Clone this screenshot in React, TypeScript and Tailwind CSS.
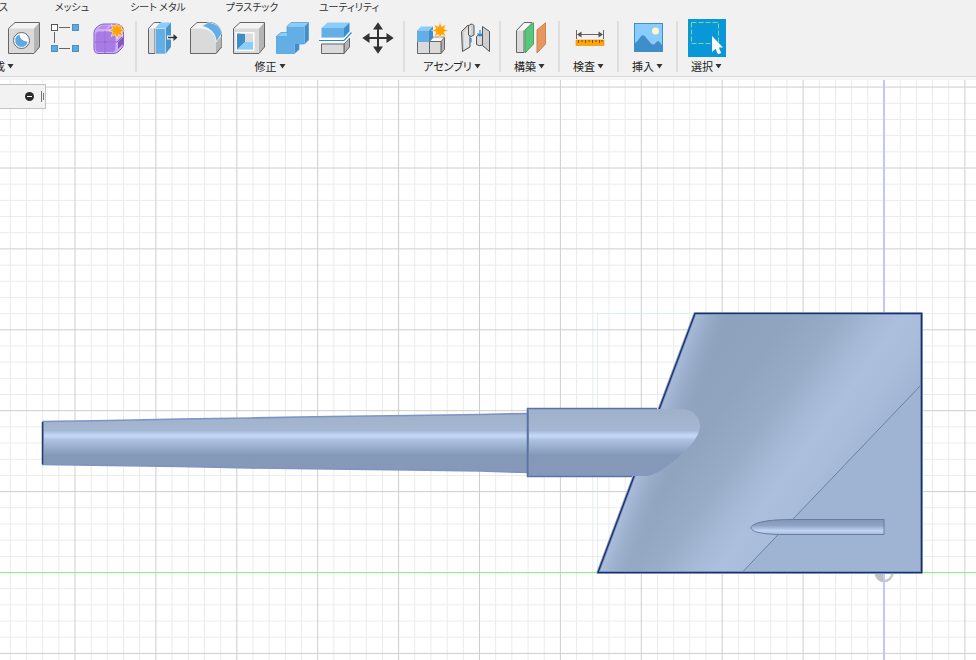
import React from 'react';

const FONT = "font-['Noto_Sans_CJK_JP',sans-serif] [font-feature-settings:'palt']";

// Screen position of the sketch origin and the spacing of the minor grid
const ORIGIN = { x: 884, y: 572.5 };
const STEP = 16.18;

const STAR_POINTS = Array.from({ length: 16 }, (_, i) => {
  const r = i % 2 === 0 ? 8.5 : 4.3;
  const a = (i * Math.PI) / 8;
  return `${(r * Math.sin(a)).toFixed(1)},${(-r * Math.cos(a)).toFixed(1)}`;
}).join(' ');

const Star = ({ x, y }: { x: number; y: number }) => (
  <polygon points={STAR_POINTS} transform={`translate(${x} ${y})`} fill="#ffa400" stroke="#f1f1f1" strokeWidth="0.6" />
);

const Icon: React.FC<{ children: React.ReactNode }> = ({ children }) => (
  <svg width="32" height="32" viewBox="0 0 32 32" className="overflow-visible" aria-hidden="true">
    {children}
  </svg>
);

const Cube = () => (
  <>
    <path d="M.5 6.5L7 .5H31.5L26 6.5Z" fill="#f4f4f4" />
    <path d="M26 6.5L31.5.5V25L26 31.5Z" fill="#b5b5b5" />
    <path d="M.5 6.5H26V31.5H.5Z" fill="#dadada" />
    <path d="M.5 6.5L7 .5H31.5V25L26 31.5H.5Z" fill="none" stroke="#666" />
  </>
);

const HoleIcon = () => (
  <Icon>
    <Cube />
    <circle cx="13.5" cy="18.5" r="8" fill="#fff" stroke="#666" />
    <path d="M11.5 12.8A6.2 6.2 0 1 0 19.6 19.5A7.5 7.5 0 0 1 11.5 12.8Z" fill="#5fa9e2" />
  </Icon>
);

const PatternIcon = () => (
  <Icon>
    <path d="M8 5.5H19M3.5 10V21M8 26.5H19" stroke="#666" fill="none" />
    <rect x=".5" y="2.5" width="6" height="6" fill="#fff" stroke="#555" />
    <g fill="#5fa9e2" stroke="#4a90c8">
      <rect x="21.5" y="2.5" width="6" height="6" />
      <rect x=".5" y="23.5" width="6" height="6" />
      <rect x="21.5" y="23.5" width="6" height="6" />
    </g>
  </Icon>
);

const FormIcon = () => (
  <Icon>
    <path d="M0 11Q0 8 2 6L5 3.500Q7 2 10 2H24Q29.500 4 29.500 8V22Q29.500 25 27 27L24 30Q22 31.500 19 31.500H5Q0 31.500 0 26Z" fill="#cfaef6" stroke="#8560bf" />
    <path d="M1.500 12Q2 9.500 5 9.500H10.500V19.500H1.500ZM11.500 9.500H19Q21.500 10 21.500 12V19.500H11.500ZM1.500 20.500H10.500V30H5Q1.500 30 1.500 26ZM11.500 20.500H21.500V26Q21.500 30 18 30H11.500Z" fill="#a87be6" />
    <path d="M4 7L8 3.500H15L12 7ZM14 7L17 3.500H22L19 7Z" fill="#b98bf0" />
    <path d="M24 20L29 15V22L24 27Z" fill="#8456c4" />
    <path d="M11 9V31M1 20H23L29 14" fill="none" stroke="#7650b0" strokeWidth="0.8" />
    <Star x={23} y={8.5} />
  </Icon>
);

const PressPullIcon = () => (
  <Icon>
    <path d="M1.500 6.500L7 .5H14L8 6.500V31.500H1.500Z" fill="#dcdcdc" stroke="#666" />
    <path d="M2 6.500L7.500 1H13L8 6.500Z" fill="#f6f6f6" />
    <path d="M8.500 6.500L13.500.5H24L18.500 6.500Z" fill="#8accfa" />
    <path d="M18.500 6.500L24 .5V25L18.500 32Z" fill="#4595cf" />
    <path d="M8.500 6.500H18.500V32H8.500Z" fill="#64aee6" stroke="#f1f1f1" strokeWidth="0.5" />
    <path d="M20 15.500H27" stroke="#f1f1f1" strokeWidth="4" />
    <path d="M21 15.500H28" stroke="#333" strokeWidth="1.400" />
    <path d="M26.500 12L30.500 15.500L26.500 19Z" fill="#333" />
  </Icon>
);

const FilletIcon = () => (
  <Icon>
    <path d="M.5 6.500L7 .5H20A12 12 0 0 1 31.500 12V25L26 31.500H.5Z" fill="#f4f4f4" stroke="#666" />
    <path d="M26 20L31.500 14V25L26 31.500Z" fill="#b5b5b5" />
    <path d="M.5 6.500H11Q25 8 26 20V31.500H.5Z" fill="#dadada" />
    <path d="M.5 6.500V31.500H26L31.500 25" fill="none" stroke="#666" />
    <path d="M12 4L18.500.3Q30 2 32 11L26.500 20Q25 7 12 4Z" fill="#64aee6" stroke="#f6f6f6" strokeWidth="0.600" />
  </Icon>
);

const ShellIcon = () => (
  <Icon>
    <Cube />
    <rect x="2.500" y="10" width="19" height="19" fill="#fff" />
    <rect x="4" y="11.500" width="16" height="16" fill="#dcdcdc" />
    <path d="M4 11.500L12 12V20L4 27.500Z" fill="#3e8fc9" />
    <path d="M4 27.500L12 20H20V27.500Z" fill="#8accfa" />
  </Icon>
);

const CombineIcon = () => (
  <Icon>
    <path d="M11 4.500L15 .5H32.500L28.500 4.500Z" fill="#8accfa" />
    <path d="M.5 14L5 10.500H12V14Z" fill="#8accfa" />
    <path d="M28.500 4.500L32.500.5V18L28.500 22Z" fill="#3e8fc9" />
    <path d="M18.500 22H23V27.500L18.500 31.500Z" fill="#3e8fc9" />
    <path d="M.5 14H11V4.500H28.500V22H18.500V31.500H.5Z" fill="#64aee6" />
    <path d="M.5 14L5 10.500H11V4.500L15 .5H32.500V18L28.500 22H23V27.500L18.500 31.500H.5Z" fill="none" stroke="#4a98d2" strokeWidth="0.7" />
  </Icon>
);

const SplitIcon = () => (
  <Icon>
    <path d="M2.500 6L8.500.5H30.500L25 6Z" fill="#8accfa" />
    <path d="M25 6L30.500.5V9.500L25 15.500Z" fill="#3e8fc9" />
    <path d="M2.500 6H25V15.500H2.500Z" fill="#64aee6" />
    <path d="M25 22L30.500 16V25L25 31.500Z" fill="#b5b5b5" stroke="#666" />
    <path d="M2.500 22H25V31.500H2.500Z" fill="#dadada" stroke="#666" />
    <path d="M.5 18.500H25L32.500 10.500" fill="none" stroke="#fff" strokeWidth="4" />
    <path d="M0 18.500H25L32.500 10.500" fill="none" stroke="#1b8bdc" strokeWidth="1.200" />
  </Icon>
);

const MoveIcon = () => (
  <Icon>
    <path d="M16 4V28M4 16H28" stroke="#333" strokeWidth="2" />
    <path d="M16 .3L21 7.500H11ZM16 31.700L11 24.500H21ZM.3 16L7.500 11V21ZM31.700 16L24.500 21V11Z" fill="#333" />
  </Icon>
);

const NewComponentIcon = () => (
  <Icon>
    <path d="M26 19.500L29.500 15V27.500L26 31.500Z" fill="#b5b5b5" stroke="#666" />
    <path d="M14.500 19.500L18 15H29.500L26 19.500Z" fill="#f6f6f6" stroke="#888" />
    <path d="M2.500 19.500H14.500V31.500H2.500ZM14.500 19.500H26V31.500H14.500Z" fill="#dadada" stroke="#666" />
    <path d="M2 8.500L6 4.500H18L14 8.500Z" fill="#8accfa" />
    <path d="M14 8.500L18 4.500V16L14 20Z" fill="#3e8fc9" />
    <path d="M2 8.500H14V20H2Z" fill="#64aee6" />
    <Star x={25} y={8.5} />
  </Icon>
);

const JointIcon = () => (
  <Icon>
    <path d="M3.500 9.500L10 3L12 5V25L4.500 29.500Z" fill="#cfcfcf" stroke="#555" />
    <path d="M6 10L11 5V24L6 27.500Z" fill="#e4e4e4" />
    <path d="M10.500 4Q13 .5 16 3.500V13Q13 16 10.500 13Z" fill="#d0d0d0" stroke="#555" />
    <path d="M12 4.500V13" stroke="#f4f4f4" />
    <path d="M24.500 4.500L31.500 9.500V29.500L24.500 23.500Z" fill="#cfcfcf" stroke="#555" />
    <path d="M18.500 14.500Q21 11 24.500 13.500V23Q21 24.500 18.500 22.500Z" fill="#d9d9d9" stroke="#555" />
    <path d="M13 16V20.500M22 8V14M19.500 11.500L22 14L24.500 11.500" fill="none" stroke="#1b8bdc" strokeWidth="1.200" />
  </Icon>
);

const PlaneIcon = () => (
  <Icon>
    <path d="M2.500 8.500L10 .5H18L10 8.500V30.500H2.500Z" fill="#dadada" stroke="#666" />
    <path d="M3.500 8.500L10.500 1.200H17L10 8.500Z" fill="#f8f8f8" />
    <path d="M11 8L19.500.8V22L11 31Z" fill="#5ac57c" stroke="#3da861" />
    <path d="M23 8L31.500.8V22L23 31Z" fill="#e6965f" stroke="#d0804a" />
  </Icon>
);

const MeasureIcon = () => (
  <Icon>
    <path d="M3.500 8V17M30.500 8V17M6 12.500H28" stroke="#666" fill="none" />
    <path d="M4 12.500L8.500 9.500V15.500ZM30 12.500L25.500 9.500V15.500Z" fill="#555" />
    <rect x="3" y="18" width="28" height="5.500" fill="#ffa400" stroke="#e08f00" strokeWidth="0.6" />
    <path d="M5.500 18V21M9 18V20M12.500 18V21M16 18V20M19.500 18V21M23 18V20M26.500 18V21M29 18V20" stroke="#7a5200" />
  </Icon>
);

const ImageIcon = () => (
  <Icon>
    <rect x="2.500" y="1.500" width="28" height="28" fill="#8accff" />
    <path d="M3 21Q6 19 8 15.500Q11 11 14 15.500L19 21.500Q22 24 24 20.500Q26 17.500 28 20.500L30.500 24V29.500H3Z" fill="#3e8fc9" />
    <circle cx="23.500" cy="9" r="3.500" fill="#fdf9c4" />
    <rect x="2.500" y="1.500" width="28" height="28" fill="none" stroke="#3e8fc9" />
  </Icon>
);

const SelectIcon = () => (
  <svg width="38" height="38" viewBox="0 0 38 38" aria-hidden="true">
    <rect x="3.500" y="3.500" width="27" height="21" fill="none" stroke="#6fe08c" strokeDasharray="5 2" />
    <path d="M24 17V33L27.500 29.800L30 35.300L33.200 33.900L30.800 28.500H35Z" fill="#fff" />
  </svg>
);

interface Tool {
  name: string;
  icon: React.FC;
  active?: boolean;
}

interface Group {
  label: string;
  tools: Tool[];
}

const TABS = [
  { label: 'サーフェス', width: 'w-[60px] -ml-[44px]' },
  { label: 'メッシュ', width: 'w-[112px]' },
  { label: 'シート メタル', width: 'w-[60px]' },
  { label: 'プラスチック', width: 'w-[128px]' },
  { label: 'ユーティリティ', width: 'w-[66px]' },
];

const GROUPS: Group[] = [
  {
    label: '作成',
    tools: [
      { name: '穴', icon: HoleIcon },
      { name: 'パターン', icon: PatternIcon },
      { name: 'フォームを作成', icon: FormIcon },
    ],
  },
  {
    label: '修正',
    tools: [
      { name: 'プレス/プル', icon: PressPullIcon },
      { name: 'フィレット', icon: FilletIcon },
      { name: 'シェル', icon: ShellIcon },
      { name: '結合', icon: CombineIcon },
      { name: 'ボディを分割', icon: SplitIcon },
      { name: '移動', icon: MoveIcon },
    ],
  },
  {
    label: 'アセンブリ',
    tools: [
      { name: '新規コンポーネント', icon: NewComponentIcon },
      { name: 'ジョイント', icon: JointIcon },
    ],
  },
  { label: '構築', tools: [{ name: 'オフセット平面', icon: PlaneIcon }] },
  { label: '検査', tools: [{ name: '計測', icon: MeasureIcon }] },
  { label: '挿入', tools: [{ name: 'キャンバス', icon: ImageIcon }] },
  { label: '選択', tools: [{ name: '選択ツール', icon: SelectIcon, active: true }] },
];

const ToolGroup = ({ group, first, last }: { group: Group; first: boolean; last: boolean }) => (
  <div className="flex shrink-0">
    <div className={`flex min-w-[57px] flex-col ${first ? 'items-start pl-[2px] pr-1' : 'items-center px-1'}`}>
      <div className="flex">
        {group.tools.map(({ name, icon: ToolIcon, active }) => (
          <button key={name} aria-label={name} className="flex h-[38px] w-[43px] items-center justify-center">
            <span className={active ? 'bg-[#0a97d9]' : ''}>
              <ToolIcon />
            </span>
          </button>
        ))}
      </div>
      <button className={`flex h-[18px] items-center gap-[2px] whitespace-nowrap text-[11px] leading-[18px] text-[#222] ${first ? '-ml-[19px]' : ''}`}>
        {group.label}
        <svg width="7" height="5" viewBox="0 0 7 5" aria-hidden="true">
          <path d="M.5 0H6.500L3.500 4.500Z" fill="#333" />
        </svg>
      </button>
    </div>
    {!last && <div className="mt-[2px] h-[51px] w-[2px] bg-[#dedede]" />}
  </div>
);

const Grid = () => {
  const columns = Array.from({ length: 181 }, (_, i) => i - 60);
  const rows = Array.from({ length: 121 }, (_, i) => i - 60);
  return (
    <g>
      {[false, true].map(major => (
        <g key={String(major)} stroke={major ? '#cecece' : '#ebebeb'}>
          {columns.filter(i => (i % 5 === 0) === major).map(i => (
            <line key={`c${i}`} x1={ORIGIN.x - i * STEP} x2={ORIGIN.x - i * STEP} y1="0" y2="2000" />
          ))}
          {rows.filter(i => (i % 5 === 0) === major).map(i => (
            <line key={`r${i}`} x1="0" x2="3000" y1={ORIGIN.y - i * STEP} y2={ORIGIN.y - i * STEP} />
          ))}
        </g>
      ))}
    </g>
  );
};

const Model = () => (
  <g>
    <defs>
      <linearGradient id="body" gradientUnits="userSpaceOnUse" x1="613" y1="450" x2="782" y2="574">
        <stop offset="0" stopColor="#8da1bd" />
        <stop offset="0.3" stopColor="#90a4bf" />
        <stop offset="0.5" stopColor="#98acc8" />
        <stop offset="0.64" stopColor="#a6b9d6" />
        <stop offset="0.74" stopColor="#acbfdd" />
        <stop offset="0.86" stopColor="#a9bcda" />
        <stop offset="1" stopColor="#a2b4d3" />
      </linearGradient>
      <linearGradient id="edge" gradientUnits="userSpaceOnUse" x1="711" y1="267" x2="747" y2="280">
        <stop offset="0" stopColor="#a9bdda" />
        <stop offset="0.35" stopColor="#a2b6d4" stopOpacity="0.6" />
        <stop offset="1" stopColor="#8da1bd" stopOpacity="0" />
      </linearGradient>
      <linearGradient id="tube" gradientUnits="userSpaceOnUse" x1="0" y1="409" x2="0" y2="477">
        <stop offset="0" stopColor="#9fb0cb" />
        <stop offset="0.2" stopColor="#a3b4ce" />
        <stop offset="0.32" stopColor="#a4b7d4" />
        <stop offset="0.36" stopColor="#bbcdec" />
        <stop offset="0.4" stopColor="#c7d9f9" />
        <stop offset="0.45" stopColor="#afc2e1" />
        <stop offset="0.56" stopColor="#9aaecd" />
        <stop offset="0.68" stopColor="#8498b8" />
        <stop offset="1" stopColor="#8799ba" />
      </linearGradient>
      <linearGradient id="pod" x1="0" y1="0" x2="0" y2="1">
        <stop offset="0" stopColor="#8396b6" />
        <stop offset="0.4" stopColor="#8fa3c4" />
        <stop offset="0.75" stopColor="#c3d5f5" />
        <stop offset="1" stopColor="#a3b7da" />
      </linearGradient>
    </defs>

    {/* Origin marker */}
    <circle cx="884" cy="572.500" r="8.500" fill="#fff" fillOpacity="0.8" stroke="#c8c8c8" strokeWidth="2.500" />
    <path d="M884 563A9.700 9.700 0 0 0 884 582.200Z" fill="#c0c0c0" />
    <path d="M884 0V2000" stroke="#c4c4ff" strokeWidth="2" />

    {/* Turret body */}
    <path d="M597.500 572V313.500H695" fill="none" stroke="#dcebf5" strokeWidth="0.8" />
    <path d="M695 313.500H921.500V572.500H598Z" fill="url(#body)" />
    <path d="M695 313.500H921.500V572.500H598Z" fill="url(#edge)" />
    <path d="M921.500 384.500V572.500H742Z" fill="#9fb3d2" />
    <path d="M921.500 384.500L742 572.500" stroke="#6d80a3" />
    <path d="M695 313.500H921.500V572.500H598Z" fill="none" stroke="#7b92c2" strokeWidth="3" strokeLinejoin="round" />
    <path d="M695 313.500H921.500V572.500H598Z" fill="none" stroke="#17305f" strokeWidth="1.200" />

    {/* Side pod */}
    <path d="M751 527.500C753 522 770 519.500 793 519.500H884V534.500H778C762 534 751 532 751 527.500Z" fill="url(#pod)" stroke="#687c9f" />

    {/* Barrel */}
    <path d="M43 421.500L110 420.500L180 419L250 418L330 416.500L410 415.500L480 414.500L528 413.500V472.500L480 471L410 470L330 469L250 468L180 466.500L110 465.500L43 464.500Z" fill="url(#tube)" stroke="#7d94c2" strokeWidth="1.600" />
    <path d="M42.500 422V464.500" stroke="#223a68" strokeWidth="1.500" />

    {/* Mantlet sleeve */}
    <path d="M528 409H684Q700 412 700 428Q698 439 684 452Q662 473 648 476H528Z" fill="url(#tube)" />
    <path d="M657 408.500H527.500V476.500H632" fill="none" stroke="#5b73a4" strokeWidth="1.600" />
    <path d="M528.500 410V475" stroke="#6f83a8" />
  </g>
);

export default function App() {
  return (
    <div className={`flex min-h-screen flex-col overflow-hidden bg-white ${FONT}`}>
      <header className="border-b-[3px] border-[#f5f5f5] bg-[#f1f1f1]">
        <nav className="flex h-[19px]">
          {TABS.map(tab => (
            <button key={tab.label} className={`flex h-[14px] shrink-0 items-center justify-center whitespace-nowrap text-[10px] leading-[14px] text-[#333] ${tab.width}`}>
              {tab.label}
            </button>
          ))}
        </nav>
        <div className="flex h-[58px] border-b border-[#dadada]">
          {GROUPS.map((group, i) => (
            <ToolGroup key={group.label} group={group} first={i === 0} last={i === GROUPS.length - 1} />
          ))}
        </div>
      </header>

      <main className="relative flex flex-1 overflow-hidden">
        <svg className="min-h-[580px] w-full flex-1" role="img" aria-label="3D ビュー">
          <g transform="translate(0 -80)">
            <Grid />
            <path d="M0 572.500H3000" stroke="#84f584" />
            <Model />
          </g>
        </svg>

        {/* Collapsed browser panel */}
        <div className="absolute left-0 top-1 flex h-[25px] w-[46px] items-center justify-end gap-[7px] border border-l-0 border-[#c2c2c2] bg-[#f2f2f2] pr-px">
          <button aria-label="ブラウザを最小化">
            <svg className="block" width="9" height="9" viewBox="0 0 9 9" aria-hidden="true">
              <circle cx="4.500" cy="4.500" r="4.500" fill="#2b2b2b" />
              <path d="M2 4.500H7" stroke="#fff" />
            </svg>
          </button>
          <span className="flex gap-px">
            <span className="h-[11px] w-px bg-[#777]" />
            <span className="mt-[2px] h-[7px] w-px bg-[#777]" />
          </span>
        </div>
      </main>
    </div>
  );
}
